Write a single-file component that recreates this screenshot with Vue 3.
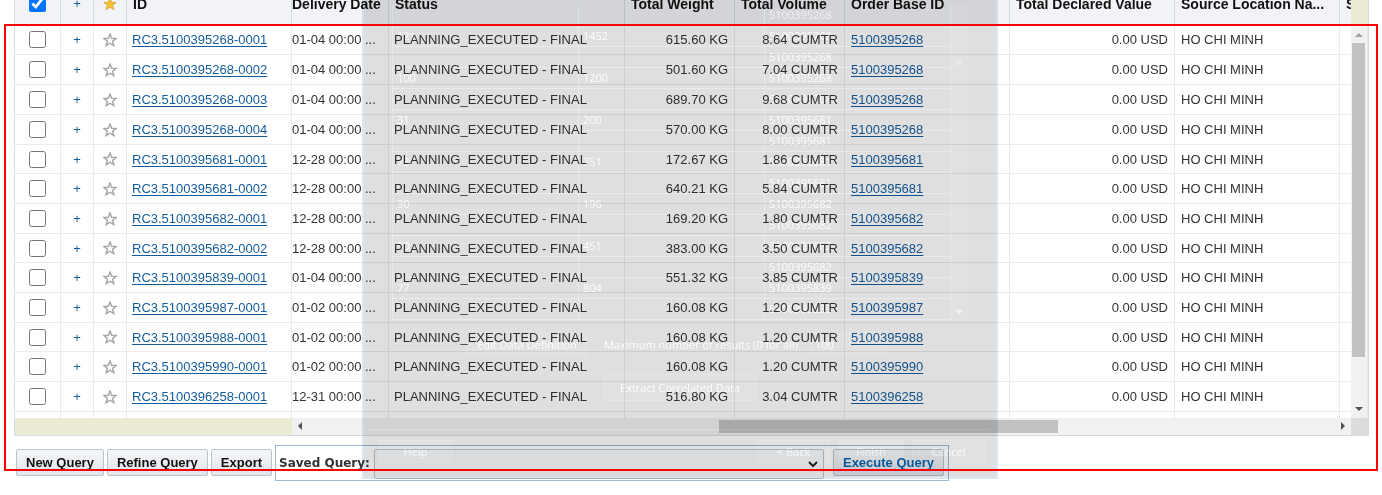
<script setup>
import { ref } from 'vue'

const raw = [
  ['5100395268-0001', '01-04', '615.60', '8.64'],
  ['5100395268-0002', '01-04', '501.60', '7.04'],
  ['5100395268-0003', '01-04', '689.70', '9.68'],
  ['5100395268-0004', '01-04', '570.00', '8.00'],
  ['5100395681-0001', '12-28', '172.67', '1.86'],
  ['5100395681-0002', '12-28', '640.21', '5.84'],
  ['5100395682-0001', '12-28', '169.20', '1.80'],
  ['5100395682-0002', '12-28', '383.00', '3.50'],
  ['5100395839-0001', '01-04', '551.32', '3.85'],
  ['5100395987-0001', '01-02', '160.08', '1.20'],
  ['5100395988-0001', '01-02', '160.08', '1.20'],
  ['5100395990-0001', '01-02', '160.08', '1.20'],
  ['5100396258-0001', '12-31', '516.80', '3.04']
]
const rows = ref(raw.map(([id, date, weight, volume]) => ({
  id: 'RC3.' + id,
  base: id.split('-')[0],
  date: date + ' 00:00 ...',
  weight: weight + ' KG',
  volume: volume + ' CUMTR',
  checked: false
})))
const allChecked = ref(true)

const preview = [
  ['', '', '5100395268'],
  ['121', '1452', '5100395268'],
  ['', '', '5100395268'],
  ['100', '1200', '5100395268'],
  ['', '', '5100395268'],
  ['31', '200', '5100395681'],
  ['', '', '5100395681'],
  ['73', '751', '5100395681'],
  ['', '', '5100395681'],
  ['30', '196', '5100395682'],
  ['', '', '5100395682'],
  ['90', '451', '5100395682'],
  ['', '', '5100395682'],
  ['77', '804', '5100395839'],
  ['', '', '5100395839']
]
const star = 'M8 1.2 L9.9 6 L15 6.3 L11 9.5 L12.4 14.5 L8 11.7 L3.6 14.5 L5 9.5 L1 6.3 L6.1 6 Z'
</script>

<template>
  <main class="page">
    <section class="grid">
      <div class="pane">
        <table class="orders">
          <colgroup>
            <col class="c-check"><col class="c-icon"><col class="c-icon"><col class="c-wide"><col class="c-date"><col class="c-status"><col class="c-num"><col class="c-num"><col class="c-wide"><col class="c-wide"><col class="c-wide"><col>
          </colgroup>
          <thead>
            <tr>
              <th class="mid"><input v-model="allChecked" type="checkbox" aria-label="Select all"></th>
              <th class="mid"><button class="plus" type="button">+</button></th>
              <th class="mid"><svg class="star gold" viewBox="0 0 16 16"><path :d="star" /></svg></th>
              <th>ID</th>
              <th class="flush">Delivery Date</th>
              <th>Status</th>
              <th>Total Weight</th>
              <th>Total Volume</th>
              <th>Order Base ID</th>
              <th>Total Declared Value</th>
              <th>Source Location Na...</th>
              <th>S</th>
            </tr>
          </thead>
          <tbody>
            <tr v-for="r in rows" :key="r.id">
              <td class="mid"><input v-model="r.checked" type="checkbox" :aria-label="r.id"></td>
              <td class="mid"><button class="plus" type="button">+</button></td>
              <td class="mid"><svg class="star" viewBox="0 0 16 16"><path :d="star" /></svg></td>
              <td><a href="#">{{ r.id }}</a></td>
              <td class="flush">{{ r.date }}</td>
              <td>PLANNING_EXECUTED - FINAL</td>
              <td class="num">{{ r.weight }}</td>
              <td class="num">{{ r.volume }}</td>
              <td class="base"><a href="#">{{ r.base }}</a></td>
              <td class="num">0.00 USD</td>
              <td class="base">HO CHI MINH</td>
              <td></td>
            </tr>
            <tr><td v-for="n in 12" :key="n"></td></tr>
          </tbody>
        </table>
      </div>
      <div class="vside">
        <div class="vcap"></div>
        <div class="vbar">
          <svg class="arrow faint" viewBox="0 0 16 16"><path d="M4 11 L8 7 L12 11 Z" /></svg>
          <div class="vtrack"><div class="vthumb"></div></div>
          <svg class="arrow" viewBox="0 0 16 16"><path d="M4 6 L12 6 L8 10 Z" /></svg>
        </div>
      </div>
      <div class="hside">
        <div class="hcap"></div>
        <svg class="arrow" viewBox="0 0 16 16"><path d="M10 4 L10 12 L6 8 Z" /></svg>
        <div class="htrack"><div class="hthumb"></div></div>
        <svg class="arrow" viewBox="0 0 16 16"><path d="M6 4 L6 12 L10 8 Z" /></svg>
      </div>
      <div class="corner"></div>
    </section>

    <form class="toolbar" @submit.prevent>
      <button class="btn" type="button">New Query</button>
      <button class="btn" type="button">Refine Query</button>
      <button class="btn" type="button">Export</button>
      <div class="saved">
        <label for="saved">Saved Query:</label>
        <div class="pick">
          <select id="saved"><option></option></select>
          <svg viewBox="0 0 12 12"><path d="M2 4 L6 8 L10 4" /></svg>
        </div>
        <button class="btn run" type="submit">Execute Query</button>
      </div>
    </form>

    <div class="dialog">
      <div class="results">
        <table class="preview">
          <tbody>
            <tr v-for="(p, i) in preview" :key="i">
              <td v-for="(c, j) in p" :key="j">{{ c }}</td>
            </tr>
          </tbody>
        </table>
        <div class="pscroll">
          <svg viewBox="0 0 16 16"><path d="M4 3.5H11M4 5.5H11M4 7.5H11M4 9.5H11" /></svg>
          <svg viewBox="0 0 16 16"><path class="solid" d="M4 6 L12 6 L8 10 Z" /></svg>
        </div>
      </div>
      <div class="options">
        <button class="ghost edit" type="button">Edit Data Definition</button>
        <label for="max">Maximum number of results (0 for all)</label>
        <input id="max" class="ghost" type="text" value="100">
      </div>
      <button class="ghost extract" type="button">Extract Correlated Data</button>
      <div class="actions">
        <button class="ghost help" type="button">Help</button>
        <button class="ghost" type="button">&lt; Back</button>
        <button class="ghost finish" type="button">Finish</button>
        <button class="ghost" type="button">Cancel</button>
      </div>
    </div>
    <div class="outline"></div>
  </main>
</template>

<style>
html, body { margin: 0; background: #fff; overflow: hidden; }
</style>

<style scoped>
* { box-sizing: border-box; }
.page { display: flow-root; position: relative; padding: 0 13px 0 14px; font: 13px "Liberation Sans", Arial, sans-serif; color: #333; }
.grid { display: grid; grid-template-columns: 1fr 17px; margin-top: -18px; border: 1px solid #d5dce3; border-top: 0; }
.pane { height: 436px; overflow: hidden; }
.orders { width: 100%; table-layout: fixed; border-collapse: separate; border-spacing: 0; }
.c-check { width: 46px; }
.c-icon { width: 33px; }
.c-wide { width: 165px; }
.c-date { width: 97px; }
.c-status { width: 236px; }
.c-num { width: 110px; }
th, td { overflow: hidden; white-space: nowrap; text-align: left; padding: 0 5px; }
th { height: 43px; background: #f2f3f7; border-right: 1px solid #d3dde6; font-size: 14px; color: #111; padding: 0 6px; }
.orders td { height: 30px; border-right: 1px solid #ebebeb; border-bottom: 1px solid #ebebeb; }
.orders tbody tr:nth-child(3n+5) td { height: 29px; }
.orders th:last-child, .orders td:last-child { border-right: 0; }
.orders .mid { text-align: center; padding: 0; }
.orders .flush { padding: 0; }
.orders .num { text-align: right; padding-right: 6px; }
.orders .base { padding-left: 6px; }
.orders a { color: #145c9e; text-underline-offset: 2px; }
.mid input { display: block; width: 17px; height: 17px; margin: 0 auto; }
.plus { display: block; margin: 0 auto; padding: 0; border: 0; background: none; color: #145c9e; font: 13px "Liberation Sans", Arial, sans-serif; }
.star { display: block; width: 14px; height: 14px; margin: 0 auto; fill: #fff; stroke: #a3a5a8; stroke-width: 1.6; }
.gold { fill: #f5c033; stroke: #d9a335; stroke-width: 1; }
.vside { display: flex; flex-direction: column; }
.vcap { height: 43px; background: #eaead5; }
.vbar { flex: 1; display: flex; flex-direction: column; background: #f1f1f1; border-right: 1px solid #e8e8dc; }
.arrow { flex: none; display: block; width: 16px; height: 18px; fill: #505050; }
.faint { fill: #a3a3a3; }
.vtrack { flex: 1; padding: 0 2px 0 1px; }
.vthumb { height: 88%; background: #c1c1c1; }
.hside { display: flex; height: 17px; background: #f1f1f1; }
.hside .arrow { width: 16px; height: 16px; }
.hcap { width: 277px; background: #eaead5; }
.htrack { flex: 1; padding: 2px 0; }
.hthumb { width: 33%; height: 13px; margin-left: 40%; background: #c1c1c1; }
.corner { background: #dcdcdc; }
.toolbar { display: flex; gap: 3px; padding: 9px 0 0 2px; align-items: flex-start; }
.btn { height: 27px; margin-top: 4px; padding: 0 9px; border: 1px solid #b9c3cc; border-radius: 2px; background: linear-gradient(#f5f6f8, #e2e6e9); color: #111; font: bold 13px "Liberation Sans", Arial, sans-serif; white-space: nowrap; }
.saved { display: flex; flex: 0 1 674px; height: 36px; padding: 3px 4px 0 3px; border: 1px solid #9fb8d5; }
.saved label { flex: none; width: 95px; padding-top: 7px; font: bold 12px/14px "DejaVu Sans", Verdana, sans-serif; color: #333; }
.pick { position: relative; flex: 1; }
.pick select { width: 100%; height: 30px; appearance: none; border: 1px solid #bfc5cb; border-radius: 2px; background: #fafbfc; }
.pick svg { position: absolute; right: 5px; top: 9px; width: 12px; height: 12px; fill: none; stroke: #222; stroke-width: 2; pointer-events: none; }
.saved .run { margin: 0 0 0 9px; color: #0a64b4; }

.dialog { position: absolute; left: 362px; top: 0; width: 636px; height: 479px; padding: 5px 5px 0; border: solid #dbe8f4; border-width: 0 2px 2px; background: #dfdfdf; mix-blend-mode: multiply; font: 11px "Open Sans", "Noto Sans", sans-serif; color: #fcfcfc; }
.results { display: flex; margin-left: 23px; }
.preview { flex: none; width: 559px; table-layout: fixed; border-collapse: separate; border-spacing: 0; border-left: 1px solid #e7e9ec; }
.preview td { height: 21px; line-height: 20px; border-right: 1px solid #e7ebf1; border-bottom: 1px solid #e7ebf1; padding: 0 4px; }
.pscroll { display: flex; flex-direction: column; justify-content: space-between; width: 17px; padding-top: 51px; background: #e1e1e1; }
.pscroll svg { width: 16px; height: 16px; fill: none; stroke: #ebebeb; }
.pscroll .solid { fill: #f3f3f3; stroke: none; }
.options { display: flex; align-items: center; margin: 13px 0 0 98px; }
.options label { margin: 0 0 0 17px; flex: 1; white-space: nowrap; }
.ghost { height: 23px; padding: 0 4px; border: 1px solid #e5e5e5; background: #e1e1e1; color: #fcfcfc; font: 11px "Open Sans", "Noto Sans", sans-serif; white-space: nowrap; }
.edit { width: 120px; }
.options input { width: 77px; margin-right: 104px; }
.extract { display: block; width: 152px; height: 27px; margin: 18px 0 0 235px; }
.actions { display: flex; gap: 8px; margin-top: 28px; padding: 9px 6px 0 10px; border-top: 2px solid #e6e6e6; }
.actions .ghost { width: 73px; }
.actions .finish { width: 66px; border: 0; background: #e4e4e4; }
.actions .help { margin-right: auto; }
.outline { position: absolute; left: 4px; right: 4px; top: 24px; height: 447px; border: 2px solid #f00; pointer-events: none; }
</style>
